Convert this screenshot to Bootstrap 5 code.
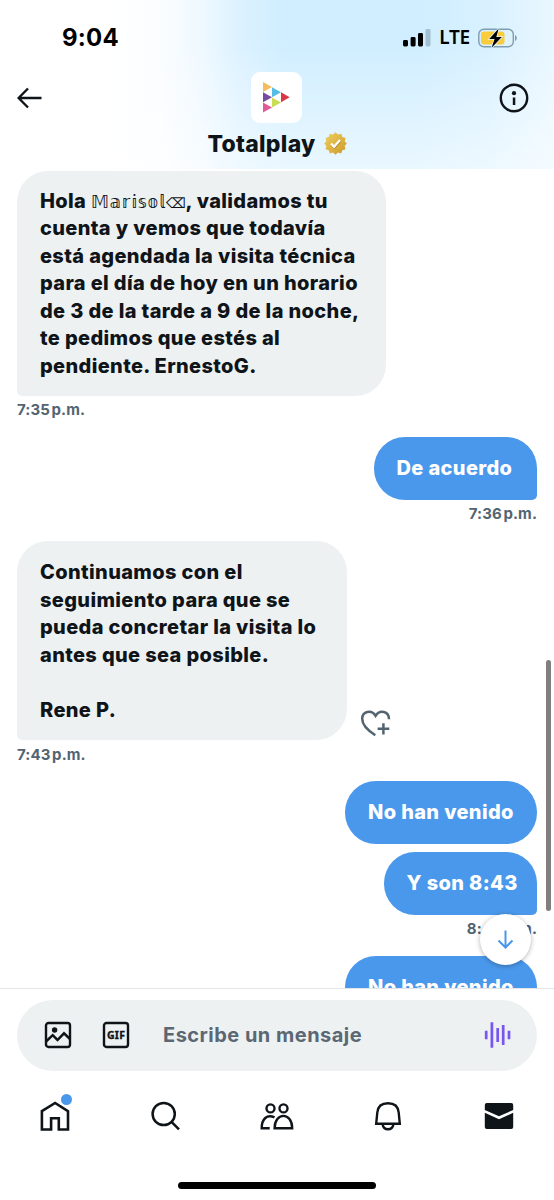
<!DOCTYPE html>
<html lang="es">
<head>
<meta charset="utf-8">
<meta name="viewport" content="width=device-width, initial-scale=1">
<title>Totalplay</title>
<link href="https://cdn.jsdelivr.net/npm/bootstrap@5.3.0/dist/css/bootstrap.min.css" rel="stylesheet">
<style>
body{font-family:Inter,"Noto Sans",sans-serif;color:#0f1419;background:#fff;height:1200px;overflow:hidden}
svg{display:block;flex:none}
.screen{width:554px;height:1200px}
.top-area{height:169px;background:
 linear-gradient(to bottom,rgba(255,255,255,0) 25%,rgba(255,255,255,.55) 100%),
 linear-gradient(to right,#fff 20%,#fafdff 29%,#f0f9ff 36%,#dcf2ff 43%,#d0eeff 51%,#d0eeff 76%,#d8f1ff 88%,#e9f7ff 100%)}
.status-row{height:72px;padding:3px 37px 0 62px}
.clock{font-size:24px;font-weight:700;line-height:1;color:#000;letter-spacing:.2px}
.lte{font-family:"Noto Sans",sans-serif;font-weight:600;font-size:19px;line-height:1;color:#000;letter-spacing:-.2px}
.nav-top{padding:0 23px 0 17px}
.avatar-box{width:51px;height:51px;border-radius:9px;background:#fff;margin-left:8px}
.title-row{font-size:23px;font-weight:800;line-height:28px;letter-spacing:.3px;margin-top:6.5px}
.chat{height:819px;padding:1.5px 17px 0}
.bubble{font-size:20px;line-height:27.5px;font-weight:800;letter-spacing:.36px;padding:18px 0 17px 23px;border-radius:31px;white-space:nowrap}
.bubble.in{background:#eef1f2;border-bottom-left-radius:5px;align-self:flex-start}
.bubble.out{background:#4a98eb;color:#fff}
.bubble.tail{border-bottom-right-radius:5px}
.b-first{width:369px;height:225px;padding-top:17.3px!important}
.b-second{width:329.5px;height:199px;padding-top:18px!important}
.b-ok{width:163.5px}.b-no{width:192px}.b-time{width:153.5px}
.gap-day{margin-top:17.5px}
.gap-run{margin-top:17px}
.gap-near{margin-top:8.5px}
.outlined{font-family:"DejaVu Sans",sans-serif;font-weight:400;font-size:17.5px;letter-spacing:.65px;line-height:1}
.outlined small{font-size:14px;letter-spacing:0}
.stamp{font-size:15px;font-weight:700;line-height:20px;color:#536471;letter-spacing:.1px;word-spacing:-2px;margin-top:4.5px;margin-bottom:-.5px}
.react{margin:0 0 1px 13.5px}
.scroll-thumb{position:absolute;right:3.5px;top:491px;width:5px;height:251px;border-radius:3px;background:#7f7f7f}
.to-bottom{position:absolute;left:480px;top:745px;width:51px;height:51px;background:#fff;box-shadow:0 1px 5px rgba(0,0,0,.3)}
.bottom-area{height:212px;border-top:1px solid #e3e5e7}
.composer{margin:11px 17px 0;height:71px;border-radius:36px;background:#eef1f2;padding:0 25px 2px 27px}
.hint{font-size:20px;font-weight:700;color:#5b6772;letter-spacing:.48px;line-height:1;margin-left:29px}
.gif-text{font-family:"Noto Sans",sans-serif;font-weight:700;font-size:10.5px;letter-spacing:.2px}
.tabs-row{height:90px}
.tab-cell{width:110.8px}
.notice-dot{position:absolute;left:61px;top:-6px;width:11px;height:11px;background:#4a98eb}
.home-bar{width:198px;height:7px;background:#000;margin-top:20.5px}
</style>
</head>
<body>
<div class="screen d-flex flex-column">
<header class="top-area">
 <div class="status-row d-flex align-items-center justify-content-between">
  <span class="clock">9:04</span>
  <div class="d-flex align-items-center">
   <svg width="28" height="18" viewBox="0 0 28 18"><rect x="0" y="11" width="5" height="6.5" rx="1.4"/><rect x="7.6" y="8" width="5" height="9.5" rx="1.4"/><rect x="15" y="4" width="5" height="13.5" rx="1.4"/><rect x="22.5" y="0" width="5" height="17.5" rx="1.4" fill="#a3bfd0"/></svg>
   <span class="lte ms-2 me-2">LTE</span>
   <svg width="39" height="20" viewBox="0 0 39 20"><rect x=".8" y="1.3" width="34.5" height="17.4" rx="5" fill="none" stroke="#7f9dad" stroke-width="1.4"/><rect x="3" y="3.4" width="23.5" height="13.2" rx="3" fill="#facc3c"/><path d="M37 7v6c2.3-1 2.3-5 0-6" fill="#7f9dad"/><path d="M20.7.4 11.2 11h5.4l-3 8.7L23.8 8.9h-5.5z" stroke="#e4f4fa" stroke-width="1.5" paint-order="stroke"/></svg>
  </div>
 </div>
 <div class="nav-top d-flex align-items-center justify-content-between">
  <svg width="28" height="24" viewBox="0 0 28 24" fill="none" stroke="#0f1419" stroke-width="2.4"><path d="M24.500 12H2M11 2.500 1.600 12 11 21.500"/></svg>
  <div class="avatar-box d-flex align-items-center justify-content-center">
   <svg width="27" height="31" viewBox="0 0 27 31"><path d="M0 0l9 5-9 5z" fill="#f3bd5d"/><path d="M9 5.3l9 5-9 5z" fill="#57bce3"/><path d="M0 10.3l9 5-9 5z" fill="#774ba0"/><path d="M18 10.3l8.7 5-8.7 5z" fill="#dc3544"/><path d="M9 15.5l9 5-9 5z" fill="#cddc57"/><path d="M0 20.6l9 5-9 5z" fill="#e35a97"/></svg>
  </div>
  <svg width="32" height="32" viewBox="-1 0 32 32"><circle cx="14" cy="16" r="13.2" fill="none" stroke="#0f1419" stroke-width="2.4"/><circle cx="14" cy="11.2" r="2.1" fill="#0f1419"/><path d="M12.8 15.5h2.500v7.500h-2.500z" fill="#0f1419"/></svg>
 </div>
 <div class="title-row d-flex align-items-center justify-content-center"><span>Totalplay</span>
  <svg class="ms-2" width="23" height="23" viewBox="0 0 23 23"><defs><linearGradient id="gold" x2="1" y2="1"><stop stop-color="#edcf62"/><stop offset=".6" stop-color="#dcb03c"/><stop offset="1" stop-color="#c5962c"/></linearGradient></defs><path d="M11.5.3 14 2.6 17.3 1.8 18.3 5 21.6 6 20.7 9.2 22.8 11.5 20.7 14 21.5 17.2 18.3 18.2 17.2 21.4 14 20.6 11.5 22.8 9 20.6 5.8 21.4 4.8 18.2 1.5 17.2 2.4 14 .2 11.5 2.4 9.2 1.5 6 4.7 5 5.7 1.8 9 2.6z" fill="url(#gold)"/><path d="M7 11.8 10.1 15 16 8.3" fill="none" stroke="#b8892e" stroke-width="2.4" transform="translate(.4 .8)"/><path d="M7 11.5 10.1 14.7 16 8" fill="none" stroke="#fff" stroke-width="2.3"/></svg>
 </div>
</header>

<main class="chat position-relative overflow-hidden d-flex flex-column">
 <div class="bubble in b-first">Hola <span class="outlined">𝕄𝕒𝕣𝕚𝕤𝕠𝕝<small>⌫</small></span>, validamos tu<br>cuenta y vemos que todavía<br>está agendada la visita técnica<br>para el día de hoy en un horario<br>de 3 de la tarde a 9 de la noche,<br>te pedimos que estés al<br>pendiente. ErnestoG.</div>
 <div class="stamp">7:35 p.m.</div>
 <div class="bubble out tail b-ok align-self-end gap-day">De acuerdo</div>
 <div class="stamp text-end">7:36 p.m.</div>
 <div class="d-flex align-items-end gap-day">
  <div class="bubble in b-second">Continuamos con el<br>seguimiento para que se<br>pueda concretar la visita lo<br>antes que sea posible.<br><br>Rene P.</div>
  <svg class="react" width="32" height="32" viewBox="0 0 32 32" fill="none" stroke="#536471" stroke-width="2.5"><path d="M15.3 28.2C7 23 2.2 17.8 2.2 11.8 2.2 4.5 11.4 2.2 15.6 8.8 19.7 2.3 29 4.1 29 12.3M23.4 16.2V27.500M17.6 21.800H29.300"/></svg>
 </div>
 <div class="stamp">7:43 p.m.</div>
 <div class="bubble out b-no align-self-end gap-run">No han venido</div>
 <div class="bubble out tail b-time align-self-end gap-near">Y son 8:43</div>
 <div class="stamp text-end">8:43 p.m.</div>
 <div class="bubble out b-no align-self-end gap-run">No han venido</div>
 <div class="scroll-thumb"></div>
 <div class="to-bottom rounded-circle d-flex align-items-center justify-content-center"><svg width="17" height="20" viewBox="0 0 17 20" fill="none" stroke="#4a98eb" stroke-width="2"><path d="M8.500 .5v17M1.500 10.500l7 7 7-7"/></svg></div>
</main>

<footer class="bottom-area">
 <div class="composer d-flex align-items-center">
  <svg width="28" height="28" viewBox="0 0 28 28"><rect x="2" y="2" width="24" height="24" rx="2.5" fill="none" stroke="#0f1419" stroke-width="2.4"/><circle cx="10.6" cy="9" r="2.7" fill="#0f1419"/><path d="M2 20.5 8.7 14.2 13.5 19 20 12.3 26 18" fill="none" stroke="#0f1419" stroke-width="2.5"/></svg>
  <svg class="ms-4" width="38" height="28" viewBox="-6 0 38 28"><rect x="2" y="2" width="24" height="24" rx="2.5" fill="none" stroke="#0f1419" stroke-width="2.4"/><text class="gif-text" x="14.100" y="17.800" text-anchor="middle" fill="#0f1419" stroke="#0f1419" stroke-width=".35">GIF</text></svg>
  <span class="hint">Escribe un mensaje</span>
  <svg class="ms-auto" width="28" height="28" viewBox="0 0 28 28" stroke="#7856f0" stroke-width="2.7"><path d="M2.2 9.8v8.5M7.9 1.2v25.6M13.7 7v14M19.2 4v20M25 9.8v8.5"/></svg>
 </div>
 <nav class="tabs-row d-flex align-items-center" aria-label="Principal">
  <div class="tab-cell d-flex justify-content-center position-relative"><svg width="32" height="32" viewBox="0 0 32 32" fill="none" stroke="#0f1419" stroke-width="2.6"><path d="M2.9 11.1 16.1 3 29 11.1V29.500H19.800V18.200h-7.700V29.500H2.900z"/></svg><span class="notice-dot rounded-circle"></span></div>
  <div class="tab-cell d-flex justify-content-center"><svg width="32" height="32" viewBox="0 0 32 32" fill="none" stroke="#0f1419" stroke-width="2.5"><circle cx="13.7" cy="14" r="11.1"/><path d="M21.5 21.8 29 29.3"/></svg></div>
  <div class="tab-cell d-flex justify-content-center"><svg width="36" height="32" viewBox="0 0 36 32" fill="none" stroke="#0f1419" stroke-width="2.4"><circle cx="11.5" cy="8.4" r="4"/><circle cx="24.5" cy="8.4" r="4"/><path d="M15.500 17.400C8 13.800 2.700 19 2.700 28.200h8M15.600 28.200c0-16.400 17.600-16.400 17.600 0z"/></svg></div>
  <div class="tab-cell d-flex justify-content-center"><svg width="32" height="32" viewBox="0 0 32 32" fill="none" stroke="#0f1419" stroke-width="2.4"><path d="M4.2 23.7 5.3 12.5C5.9 5.8 10 3.2 16 3.2s10.1 2.6 10.7 9.3l1.1 11.2zM10.5 24c.6 3.7 2.7 5.3 5.5 5.3s4.9-1.6 5.5-5.3"/></svg></div>
  <div class="tab-cell d-flex justify-content-center align-items-center"><svg width="30" height="28" viewBox="0 0 30 28" fill="#0f1419"><path d="M.8 8V3a2 2 0 0 1 2-2h24.400a2 2 0 0 1 2 2v5L15 14.300zM.8 10.800 15 17.300 29.200 10.800V25a2 2 0 0 1-2 2H2.800a2 2 0 0 1-2-2z"/></svg></div>
 </nav>
 <div class="home-bar rounded-pill mx-auto"></div>
</footer>
</div>
</body>
</html>
